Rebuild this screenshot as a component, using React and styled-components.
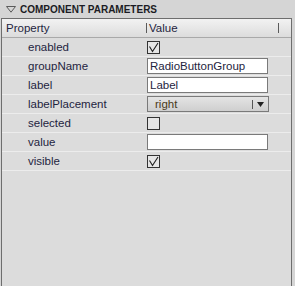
import React from "react";
import styled, { createGlobalStyle } from "styled-components";

const GlobalStyle = createGlobalStyle`
  body {
    margin: 0;
    background: #d5d5d5;
    font-family: "Liberation Sans", Arial, sans-serif;
  }
`;

const params = [
  { name: "enabled", type: "check", value: true },
  { name: "groupName", type: "text", value: "RadioButtonGroup" },
  { name: "label", type: "text", value: "Label" },
  { name: "labelPlacement", type: "select", value: "right" },
  { name: "selected", type: "check", value: false },
  { name: "value", type: "text", value: "" },
  { name: "visible", type: "check", value: true },
];

const App = () => {
  return (
    <>
      <GlobalStyle />
      <Panel>
        <TitleBar>
          <svg width="10" height="7" viewBox="0 0 10 7">
            <path d="M0.5 0.5 L9.5 0.5 L5 6.2 Z" fill="none" stroke="#5a5a5a" strokeWidth="1" />
          </svg>
          <Title>COMPONENT PARAMETERS</Title>
        </TitleBar>
        <Table>
          <HeadRow>
            <HeadCell>Property</HeadCell>
            <HeadCell $value>Value</HeadCell>
          </HeadRow>
          {params.map((p) => (
            <Row key={p.name}>
              <Name>{p.name}</Name>
              <ValueCell>
                {p.type === "check" && (
                  <Check>
                    {p.value && (
                      <svg width="11" height="11" viewBox="0 0 11 11">
                        <path d="M1.5 4.5 L4.5 9.5 L10 1" fill="none" stroke="#1e1e1e" strokeWidth="1.1" />
                      </svg>
                    )}
                  </Check>
                )}
                {p.type === "text" && <TextBox>{p.value}</TextBox>}
                {p.type === "select" && (
                  <Select>
                    <span>{p.value}</span>
                    <Arrow>
                      <svg width="7" height="5" viewBox="0 0 7 5">
                        <path d="M0 0 L7 0 L3.5 5 Z" fill="#222" />
                      </svg>
                    </Arrow>
                  </Select>
                )}
              </ValueCell>
            </Row>
          ))}
        </Table>
      </Panel>
    </>
  );
};

export default App;

const Panel = styled.div`
  width: 295px;
  height: 286px;
  display: flex;
  flex-direction: column;
`;

const TitleBar = styled.div`
  height: 18px;
  display: flex;
  align-items: center;
  padding-left: 6px;
  gap: 4px;
`;

const Title = styled.span`
  font-size: 10px;
  font-weight: bold;
  color: #1c1c24;
`;

const Table = styled.div`
  flex: 1;
  margin-left: 1px;
  width: 289px;
  border: 1px solid #6e6e6e;
  border-bottom: none;
  background: #dcdcdc;
`;

const HeadRow = styled.div`
  height: 18px;
  display: flex;
  background: linear-gradient(#f2f2f2, #dcdcdc);
  border-bottom: 1px solid #a9a9a9;
`;

const HeadCell = styled.div`
  display: flex;
  align-items: center;
  font-size: 11.5px;
  color: #1e2440;
  width: ${(p) => (p.$value ? "129px" : "140px")};
  padding-left: ${(p) => (p.$value ? "2px" : "4px")};
  border-left: ${(p) => (p.$value ? "1px solid #5a5a5a" : "none")};
  border-right: ${(p) => (p.$value ? "1px solid #5a5a5a" : "none")};
  margin: ${(p) => (p.$value ? "4px 0" : "0")};
`;

const Row = styled.div`
  height: 18px;
  display: flex;
  align-items: center;
  border-bottom: 1px solid #ececec;
`;

const Name = styled.div`
  width: 114px;
  padding-left: 26px;
  font-size: 11.5px;
  color: #1e2440;
`;

const ValueCell = styled.div`
  padding-left: 5px;
  display: flex;
  align-items: center;
`;

const Check = styled.div`
  width: 11px;
  height: 11px;
  border: 1px solid #333;
  background: #e6e6e6;
  display: flex;
  align-items: center;
  justify-content: center;
`;

const TextBox = styled.div`
  width: 117px;
  height: 14px;
  border: 1px solid #7a7a7a;
  background: #fff;
  font-size: 11.5px;
  color: #1e2440;
  padding-left: 2px;
  line-height: 14px;
`;

const Select = styled.div`
  width: 113px;
  height: 14px;
  border: 1px solid #7a7a7a;
  background: linear-gradient(#e4e4e4, #cfcfcf);
  font-size: 11.5px;
  color: #4a3a20;
  padding-left: 7px;
  display: flex;
  align-items: center;
  justify-content: space-between;
`;

const Arrow = styled.div`
  height: 9px;
  width: 15px;
  border-left: 1px solid #555;
  display: flex;
  align-items: center;
  justify-content: center;
`;
